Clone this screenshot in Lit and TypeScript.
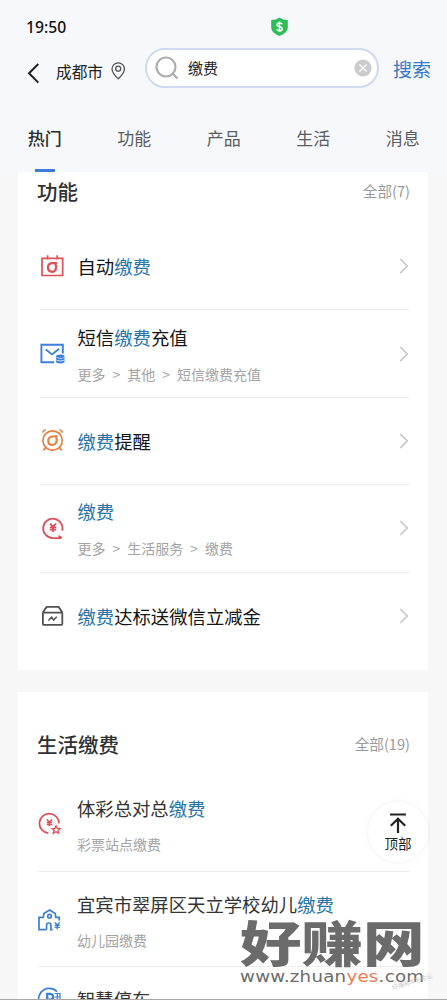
import { LitElement, html, svg, css } from "lit";
import { customElement, property } from "lit/decorators.js";

const yen = (x: number, y: number, s: number) => svg`
  <g transform="translate(${x} ${y}) scale(${s})">
    <path d="M-3 -4L0 -0.8L3 -4M0 -0.8V4.2M-3.2 -0.4H3.2M-3.2 2H3.2" />
  </g>`;

const icons: Record<string, unknown> = {
  calendar: svg`<g stroke="#e05058" stroke-width="1.7">
    <path d="M2 4.300H22.700V21.500H2ZM7.600 1.200V5.600M17.200 1.200V5.600" />
    <path stroke-width="2.300" d="M17 8.800Q15.400 9.200 12.700 9.200C9.800 9.200 8 11 8 13.600C8 16.200 9.800 17.800 12.200 17.800C15.400 17.800 17.200 14.600 15.500 9.800" /></g>`,
  mail: svg`<g stroke="#3a80de" stroke-width="1.9">
    <path d="M14 21.200H1.400V3.800H22.800V12.500" />
    <path d="M5.800 8.400L12 13.400L19.200 7.800" />
    <g fill="#3a80de" stroke="none"><ellipse cx="20.300" cy="15.300" rx="4.300" ry="1.700" />
    <path d="M16 16.500Q20.300 18.800 24.600 16.500V18.600Q20.300 20.800 16 18.600ZM16 19.300Q20.300 21.500 24.600 19.300V21.200Q20.300 23.600 16 21.200Z" /></g></g>`,
  alarm: svg`<g stroke="#e5803f" stroke-width="1.700">
    <circle cx="12.600" cy="12.500" r="9.700" />
    <path d="M2.600 4.600Q3.200 2.400 5.800 1.700M22.600 4.600Q22 2.400 19.400 1.700M5.600 19.800L3.400 22.400M19.600 19.800L21.800 22.400" />
    <path stroke-width="2.200" d="M17.500 8.100Q15.800 8.500 13 8.500C10.100 8.500 8.300 10.300 8.300 12.900C8.300 15.400 10.100 17 12.500 17C15.900 17 17.600 13.800 16.400 9" /></g>`,
  yenCircle: svg`<g stroke="#db505d" stroke-width="1.800">
    <path d="M21.600 22.100H12.800A9.700 9.700 0 1 1 22.300 14.600M18.600 19.800L21.800 22.100" />
    ${yen(13, 11.700, 1)}</g>`,
  box: svg`<g stroke="#505050" stroke-width="1.800">
    <path d="M2.800 8.600L6.600 2.900H18.600L22.400 8.600M3.800 8.600H21.400Q22.300 8.600 22.300 9.600V19.800Q22.300 20.800 21.300 20.800H3.900Q2.900 20.800 2.900 19.800V9.600Q2.900 8.600 3.800 8.600Z" />
    <path stroke-width="1.500" d="M8.400 16.500L11.600 13.200L13.500 16L16.800 12.800" /></g>`,
  yenStar: svg`<g stroke="#df4d55" stroke-width="1.700">
    <path d="M11.300 22.200A9.800 9.800 0 1 1 22 12.600" />
    ${yen(12.400, 11.800, 0.85)}
    <path stroke-width="1.300" d="M19 14.800L20.200 17.400L23.200 17.600L20.900 19.400L21.700 22.200L19 20.700L16.300 22.300L17.200 19.300L15 17.500L17.900 17.300Z" /></g>`,
  school: svg`<g stroke="#3c7fd4" stroke-width="1.700">
    <path d="M9.400 22.600H2V10.300H6.300L6.900 6.600L12.600 3L18.200 6.600L18.800 10.300H22.200V13.500" />
    <circle cx="12.500" cy="9.200" r="1.800" />
    <path d="M9.600 22.600V17.800Q9.600 16 11.800 16Q13.900 16 13.900 17.800V22.600H15.600" />
    ${yen(20.200, 18.700, 0.82)}</g>`,
  parking: svg`<g stroke="#3c7fd4" stroke-width="1.700">
    <path d="M20 4.600A10.800 10.800 0 1 0 22 17" />
    <path stroke-width="2.300" d="M10.200 17V6.900H13.200A2.900 2.900 0 0 1 13.200 12.700H10.200" />
    <path stroke-width="1.200" d="M17.500 6.500H23V13.500H17.500M17.500 10H23M20.300 6.500V13.500" /></g>`,
};

interface Item {
  icon: string;
  text: string;
  path?: string[];
}

const KEYWORD = "缴费";

@customElement("result-row")
class ResultRow extends LitElement {
  @property({ attribute: false }) item!: Item;
  @property({ type: Boolean }) arrow = false;

  static styles = css`
    :host { display: flex; align-items: center; box-sizing: border-box; }
    svg { display: block; fill: none; flex: none; overflow: visible; }
    .icon { width: 25px; height: 25px; margin-right: var(--icon-gap, 12.500px); }
    .text { flex: 1; white-space: nowrap; padding-top: var(--text-drop, 0px); }
    .title { font-size: 18.35px; line-height: 26px; color: var(--title, #141414); }
    .hit { color: #2873a8; }
    .sub { display: flex; gap: 7px; font-size: 14px; line-height: 20px; margin-top: var(--sub-gap, 13px); color: #a3a3a3; }
    .chevron { width: 10px; height: 16px; margin-right: 1px; }
  `;

  render() {
    const parts = this.item.text.split(KEYWORD);
    return html`
      <svg class="icon" viewBox="0 0 25 25">${icons[this.item.icon]}</svg>
      <div class="text">
        <div class="title">${parts.map((p, i) => html`${i ? html`<span class="hit">${KEYWORD}</span>` : ""}${p}`)}</div>
        ${this.item.path
          ? html`<div class="sub">${this.item.path.map((p, i) => html`${i ? html`<span>&gt;</span>` : ""}<span>${p}</span>`)}</div>`
          : ""}
      </div>
      ${this.arrow
        ? html`<svg class="chevron" viewBox="0 0 10 16"><path d="M1.300 1L8.300 8L1.300 15" stroke="#c4c4c4" stroke-width="1.500" /></svg>`
        : ""}
    `;
  }
}

const features: Item[] = [
  { icon: "calendar", text: "自动缴费" },
  { icon: "mail", text: "短信缴费充值", path: ["更多", "其他", "短信缴费充值"] },
  { icon: "alarm", text: "缴费提醒" },
  { icon: "yenCircle", text: "缴费", path: ["更多", "生活服务", "缴费"] },
  { icon: "box", text: "缴费达标送微信立减金" },
];

const services: Item[] = [
  { icon: "yenStar", text: "体彩总对总缴费", path: ["彩票站点缴费"] },
  { icon: "school", text: "宜宾市翠屏区天立学校幼儿缴费", path: ["幼儿园缴费"] },
  { icon: "parking", text: "智慧停车" },
];

@customElement("app-root")
class AppRoot extends LitElement {
  static styles = css`
    :host {
      display: flex; flex-direction: column; position: relative; box-sizing: border-box;
      width: 447px; height: 1000px; overflow: hidden; background: #f7f7f7;
      font-family: "Noto Sans CJK SC", "Noto Sans", sans-serif; color: #222;
      border-bottom: 1px solid #a8a8a8;
    }
    svg { display: block; fill: none; flex: none; }
    header { flex: none; height: 172px; background: #f6f8fb; display: flex; flex-direction: column; }
    .status { height: 48px; padding: 6px 0 0 26px; box-sizing: border-box; display: flex; align-items: center; }
    .time { width: 245px; font: 500 15.700px "Noto Sans", sans-serif; line-height: 20px; color: #111; margin-top: -1px; }
    .shield { width: 17px; height: 20px; margin-top: -1px; }
    .search { height: 40px; display: flex; align-items: center; padding-left: 27px; }
    .back { width: 13px; height: 22px; margin: 9px 16px 0 0; }
    .city { font-size: 15.700px; line-height: 22px; margin-top: 8px; width: 55px; white-space: nowrap; }
    .pin { width: 14px; height: 18px; margin-top: 6px; margin-right: 20px; }
    .box { box-sizing: border-box; width: 234px; height: 40px; border: 2px solid #cddaef; border-radius: 20px; background: #fff; display: flex; align-items: center; padding: 0 5px 0 8px; }
    .glass { width: 24px; height: 24px; margin-right: 9px; }
    .query { flex: 1; font-size: 15px; line-height: 22px; }
    .clear { width: 18px; height: 18px; }
    .go { font-size: 19px; line-height: 26px; color: #3679cd; margin: 1px 0 0 14px; white-space: nowrap; }
    nav { flex: 1; display: grid; grid-template-columns: repeat(5, 89.500px); }
    .tab { display: flex; flex-direction: column; align-items: center; font-size: 17px; line-height: 24px; padding-top: 38px; color: #5a5c60; }
    .active { font-weight: 500; color: #2a2b2e; }
    .bar { width: 20px; height: 3px; margin-top: 19px; background: #3f7cdf; }
    .card { flex: none; box-sizing: border-box; width: 410px; margin-left: 18px; background: #fff; }
    .first { height: 498px; }
    .second { height: 307px; overflow: hidden; margin-top: 22px; --title: #333; --sub-gap: 13px; --text-drop: 2px; }
    .head { box-sizing: border-box; display: flex; justify-content: space-between; align-items: center; padding: 0 18px 0 19px; }
    .first .head { height: 51px; padding-bottom: 14px; }
    .second .head { height: 84px; padding-top: 20px; }
    .name { font-size: 20.500px; font-weight: 500; line-height: 30px; color: #303030; }
    .all { font-size: 14.600px; line-height: 22px; color: #999; }
    .rows { margin: 0 18px 0 22px; }
    .first result-row { height: 87.400px; border-bottom: 1.500px solid #ededed; --sub-gap: 14px; }
    .first result-row:last-child { border: 0; }
    .second .rows { margin-left: 19px; --icon-gap: 15px; }
    .second result-row { height: 95px; border-bottom: 1.500px solid #ededed; }
    .second result-row:first-child { height: 96px; }
    .second result-row:last-child { height: 65px; --text-drop: 0px; }
    .top { position: absolute; left: 368px; top: 802px; width: 60px; height: 60px; border-radius: 50%; background: #fff; box-shadow: 0 0 5px rgba(0,0,0,.07); display: flex; flex-direction: column; align-items: center; }
    .top svg { width: 18px; height: 22px; margin-top: 10px; }
    .toplabel { font-size: 13.500px; line-height: 18px; color: #222; }
    .mark { position: absolute; left: 240px; top: 918px; width: 188px; color: #6b6b6b; }
    .brand { font-size: 61.500px; font-weight: 900; line-height: 46px; height: 46px; white-space: nowrap; transform: scaleY(.8); }
    .site { font: 500 15.200px "DejaVu Sans", sans-serif; line-height: 16px; white-space: nowrap; margin-top: 5px; letter-spacing: .2px; transform: scaleX(1.200); transform-origin: left; }
    .yes { color: #f07a55; }
    .stamp { position: absolute; left: 391px; top: 978px; font-size: 6px; line-height: 7px; color: #c9c9c9; transform: rotate(-17deg); white-space: nowrap; }
  `;

  private card(cls: string, name: string, total: number, items: Item[], arrow: boolean) {
    return html`<section class="card ${cls}">
      <div class="head"><span class="name">${name}</span><span class="all">全部(${total})</span></div>
      <div class="rows">${items.map((i) => html`<result-row .item=${i} .arrow=${arrow}></result-row>`)}</div>
    </section>`;
  }

  render() {
    return html`
      <header>
        <div class="status">
          <span class="time">19:50</span>
          <svg class="shield" viewBox="0 0 17 20">
            <path fill="#2fbd58" d="M8.500 0.500Q12 3 16.800 3V10.500Q16.800 16 8.500 19Q0.200 16 0.200 10.500V3Q5 3 8.500 0.500Z" />
            <path stroke="#fff" stroke-width="1.500" d="M11.200 7.200Q10.600 5.900 8.500 5.900Q6 5.900 6 7.700Q6 9.200 8.500 9.700Q11.200 10.200 11.200 11.900Q11.200 13.700 8.500 13.700Q6.300 13.700 5.700 12.300M8.500 4.500V15" />
          </svg>
        </div>
        <div class="search">
          <svg class="back" viewBox="0 0 13 22"><path d="M11.300 2L2 11.300L11.300 20.600" stroke="#222" stroke-width="2" /></svg>
          <span class="city">成都市</span>
          <svg class="pin" viewBox="0 0 14 18"><g stroke="#555" stroke-width="1.300"><path d="M7.300 16.800Q1 11 1 7A6.200 6.200 0 0 1 13.400 7Q13.400 11 7.300 16.800Z" /><circle cx="7.200" cy="6.700" r="2.500" /></g></svg>
          <div class="box">
            <svg class="glass" viewBox="0 0 24 24"><g stroke="#adadad" stroke-width="2.200"><circle cx="11" cy="11" r="9.500" /><path d="M17.700 17.700L22.500 22.500" /></g></svg>
            <span class="query">缴费</span>
            <svg class="clear" viewBox="0 0 18 18"><circle cx="9" cy="9" r="8.600" fill="#cbcbcb" /><path d="M5.400 5.400L12.600 12.600M12.600 5.400L5.400 12.600" stroke="#fff" stroke-width="1.400" /></svg>
          </div>
          <span class="go">搜索</span>
        </div>
        <nav>
          ${["热门", "功能", "产品", "生活", "消息"].map(
            (t, i) => html`<div class="tab ${i ? "" : "active"}">${t}${i ? "" : html`<span class="bar"></span>`}</div>`
          )}
        </nav>
      </header>
      ${this.card("first", "功能", 7, features, true)}
      ${this.card("second", "生活缴费", 19, services, false)}
      <div class="top">
        <svg viewBox="0 0 18 22"><path d="M1 2.500H17M9 21V7M1.800 13.800L9 6.800L16.200 13.800" stroke="#222" stroke-width="2.200" /></svg>
        <span class="toplabel">顶部</span>
      </div>
      <div class="mark">
        <div class="brand">好赚网</div>
        <div class="site">www.zhuan<span class="yes">yes</span>.com</div>
      </div>
      <div class="stamp">好赚网羊毛论坛</div>
    `;
  }
}
